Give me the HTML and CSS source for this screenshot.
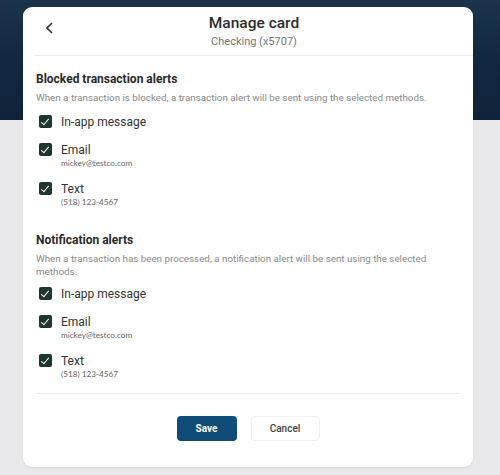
FILE: index.html
```html
<!DOCTYPE html>
<html lang="en">

<head>
    <meta charset="UTF-8">
    <meta name="viewport" content="width=device-width, initial-scale=1.0">
    <title>Manage card</title>
    <link rel="stylesheet" href="styles.css">
</head>

<body>
    <div class="card">
        <div class="header">
            <button class="back" aria-label="Back">
                <svg width="9" height="12" viewBox="0 0 9 12">
                    <path d="M7 1 L2 6 L7 11" fill="none" stroke="#333" stroke-width="1.6" />
                </svg>
            </button>
            <h1 class="title">Manage card</h1>
            <p class="subtitle">Checking (x5707)</p>
        </div>

        <div class="section">
            <h2 class="section-title">Blocked transaction alerts</h2>
            <p class="desc">When a transaction is blocked, a transaction alert will be sent using the selected methods.</p>
            <label class="option">
                <span class="box"></span>
                <span class="label">In-app message</span>
            </label>
            <label class="option">
                <span class="box"></span>
                <span class="label">Email<small>mickey@testco.com</small></span>
            </label>
            <label class="option">
                <span class="box"></span>
                <span class="label">Text<small>(518) 123-4567</small></span>
            </label>
        </div>

        <div class="section second">
            <h2 class="section-title">Notification alerts</h2>
            <p class="desc">When a transaction has been processed, a notification alert will be sent using the selected methods.</p>
            <label class="option">
                <span class="box"></span>
                <span class="label">In-app message</span>
            </label>
            <label class="option">
                <span class="box"></span>
                <span class="label">Email<small>mickey@testco.com</small></span>
            </label>
            <label class="option">
                <span class="box"></span>
                <span class="label">Text<small>(518) 123-4567</small></span>
            </label>
        </div>

        <div class="actions">
            <button class="btn save">Save</button>
            <button class="btn cancel">Cancel</button>
        </div>
    </div>
</body>

</html>
```

FILE: styles.css
```css
body {
    margin: 0;
    height: 475px;
    font-family: Roboto, "Liberation Sans", sans-serif;
    background: linear-gradient(180deg, #1b324b 0px, #122841 60px, #0f2239 120px, #e8e7ea 120px);
    background-color: #e8e7ea;
    padding-top: 7px;
    box-sizing: border-box;
}

.card {
    width: 450px;
    height: 460px;
    margin-left: 23px;
    background-color: #fff;
    border-radius: 9px;
    box-sizing: border-box;
    box-shadow: 0 1px 2px rgba(0, 0, 0, 0.08);
}

.header {
    position: relative;
    margin-left: 12px;
    padding: 6px 0 6px;
    border-bottom: 1px solid #ececec;
    text-align: center;
}

.back {
    position: absolute;
    left: 10px;
    top: 15px;
    border: none;
    background: none;
    padding: 0;
    line-height: 0;
}

.title {
    margin: 0;
    font-size: 15.5px;
    font-weight: 500;
    line-height: 20px;
    color: #2d2d2d;
}

.subtitle {
    margin: 2px 0 0;
    font-size: 11px;
    line-height: 14px;
    font-weight: 400;
    color: #777;
}

.section {
    padding: 15px 13px 0;
}

.section.second {
    padding-top: 25px;
}

.section-title {
    margin: 0;
    font-size: 12px;
    line-height: 16px;
    font-weight: 700;
    color: #2a2a2a;
}

.desc {
    margin: 4px 0 11px;
    font-size: 9.8px;
    line-height: 13px;
    color: #8a8a8a;
}

.second .desc {
    margin-bottom: 9px;
}

.option {
    display: flex;
    align-items: flex-start;
    gap: 9px;
    margin-bottom: 14px;
    padding-left: 3px;
}

.option:last-child {
    margin-bottom: 0;
}

.box {
    width: 13px;
    height: 13px;
    border-radius: 2px;
    background-color: #1f3630;
    flex-shrink: 0;
    position: relative;
}

.box::after {
    content: "";
    position: absolute;
    left: 4px;
    top: 1.5px;
    width: 3px;
    height: 7px;
    border: solid #fff;
    border-width: 0 1.8px 1.8px 0;
    transform: rotate(40deg);
}

.label {
    display: flex;
    flex-direction: column;
    font-size: 12px;
    line-height: 14px;
    color: #333;
}

.label small {
    margin-top: 1px;
    font-family: Lato, "Open Sans", sans-serif;
    font-size: 8.2px;
    line-height: 10px;
    color: #666;
}

.actions {
    margin: 14px 13px 0;
    padding-top: 22px;
    border-top: 1px solid #ececec;
    display: flex;
    justify-content: center;
    gap: 14px;
}

.btn {
    height: 25px;
    border-radius: 4px;
    font-family: Roboto, "Liberation Sans", sans-serif;
    font-size: 10px;
    font-weight: 500;
    cursor: pointer;
}

.save {
    width: 60px;
    border: none;
    background-color: #0f4c78;
    color: #fff;
    font-weight: 700;
}

.cancel {
    width: 69px;
    border: 1px solid #efefef;
    background-color: #fff;
    color: #444;
}
```
